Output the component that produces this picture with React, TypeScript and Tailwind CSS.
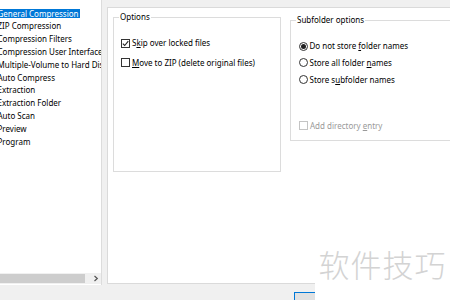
import * as React from "react";

const treeItems = [
  "General Compression",
  "ZIP Compression",
  "Compression Filters",
  "Compression User Interface",
  "Multiple-Volume to Hard Disk",
  "Auto Compress",
  "Extraction",
  "Extraction Folder",
  "Auto Scan",
  "Preview",
  "Program",
];

function CheckBox({ checked, disabled }: { checked?: boolean; disabled?: boolean }) {
  return (
    <span
      className={`flex h-[9px] w-[9px] shrink-0 items-center justify-center border bg-white ${
        disabled ? "border-[#c4c4c4]" : "border-[#333333]"
      }`}
    >
      {checked && (
        <svg width="7" height="7" viewBox="0 0 7 7">
          <polyline points="0.8,3.6 2.7,5.5 6.3,1.2" fill="none" stroke="#222" strokeWidth="1.1" />
        </svg>
      )}
    </span>
  );
}

function Radio({ checked }: { checked?: boolean }) {
  return (
    <span className="flex h-[9px] w-[9px] shrink-0 items-center justify-center rounded-full border border-[#333333] bg-white">
      {checked && <span className="h-[5px] w-[5px] rounded-full bg-[#222]" />}
    </span>
  );
}

export default function App() {
  return (
    <div className="relative h-[300px] w-[450px] overflow-hidden bg-[#f0f0f0] font-['Noto_Sans',sans-serif] text-[8px] text-black">
      <div className="flex h-[285px]">
        {/* tree */}
        <div className="flex w-[102px] shrink-0 flex-col overflow-hidden border-r border-[#dcdcdc] bg-white">
          <div className="flex-1 pt-[7px]">
            {treeItems.map((t, i) => (
              <div key={t} className="flex h-[12.8px] items-center whitespace-nowrap">
                <span
                  className={`ml-[-3.5px] flex h-[9.5px] items-center px-[1px] leading-[9.5px] ${
                    i === 0 ? "bg-[#0078d7] text-white" : ""
                  }`}
                >
                  {t}
                </span>
              </div>
            ))}
          </div>
          <div className="flex h-[11px] items-stretch bg-[#f0f0f0] py-[1px]">
            <div className="w-[85px] bg-[#cdcdcd]" />
            <div className="flex flex-1 items-center justify-end pr-[2px]">
              <svg width="6" height="7" viewBox="0 0 6 7">
                <polyline points="1.5,1 4.3,3.5 1.5,6" fill="none" stroke="#555" strokeWidth="1.2" />
              </svg>
            </div>
          </div>
          <div className="h-[1px] bg-white" />
        </div>

        {/* page */}
        <div className="ml-[5px] mt-[7px] flex h-[277px] flex-1 items-start border border-r-0 border-[#dadada] bg-white pl-[5px]">
          <fieldset className="mt-[3px] h-[161px] w-[168px] shrink-0 border border-[#dcdcdc] px-[5px]">
            <legend className="px-[1px] leading-[12px]">Options</legend>
            <div className="mt-[14px] flex h-[12px] items-center gap-[2px] pl-[2px]">
              <CheckBox checked />
              <span>
                S<u className="underline-offset-1">k</u>ip over locked files
              </span>
            </div>
            <div className="mt-[7.5px] flex h-[12px] items-center gap-[2px] pl-[2px]">
              <CheckBox />
              <span>
                <u className="underline-offset-1">M</u>ove to ZIP (delete original files)
              </span>
            </div>
          </fieldset>

          <fieldset className="ml-[9px] mt-[6px] h-[127px] flex-1 border border-r-0 border-[#dcdcdc] px-[5px]">
            <legend className="px-[1px] leading-[12px]">Subfolder options</legend>
            <div className="mt-[14px] flex flex-col gap-[4.8px] pl-[3px]">
              <div className="flex h-[12px] items-center gap-[1.5px]">
                <Radio checked />
                <span>
                  Do not store <u className="underline-offset-1">f</u>older names
                </span>
              </div>
              <div className="flex h-[12px] items-center gap-[1.5px]">
                <Radio />
                <span>
                  Store all folder <u className="underline-offset-1">n</u>ames
                </span>
              </div>
              <div className="flex h-[12px] items-center gap-[1.5px]">
                <Radio />
                <span>
                  Store s<u className="underline-offset-1">u</u>bfolder names
                </span>
              </div>
            </div>
            <div className="mt-[34px] flex h-[12px] items-center gap-[2px] pl-[3px] text-[#9a9a9a]">
              <CheckBox disabled />
              <span>
                Add directory <u className="underline-offset-1">e</u>ntry
              </span>
            </div>
          </fieldset>
        </div>
      </div>

      {/* dialog buttons */}
      <div className="pl-[294px] pt-[7px]">
        <div className="h-[20px] w-[70px] border border-[#0078d7] bg-[#e1e1e1]" />
      </div>

      {/* watermark */}
      <div className="absolute left-[315px] top-[240px] flex h-[60px] w-[135px] items-start justify-center bg-white pt-[6px]">
        <span className="font-['Noto_Sans_CJK_SC',sans-serif] text-[31px] font-light leading-[36px] tracking-[1px] text-[#d3d3d3]">
          软件技巧
        </span>
      </div>
    </div>
  );
}
